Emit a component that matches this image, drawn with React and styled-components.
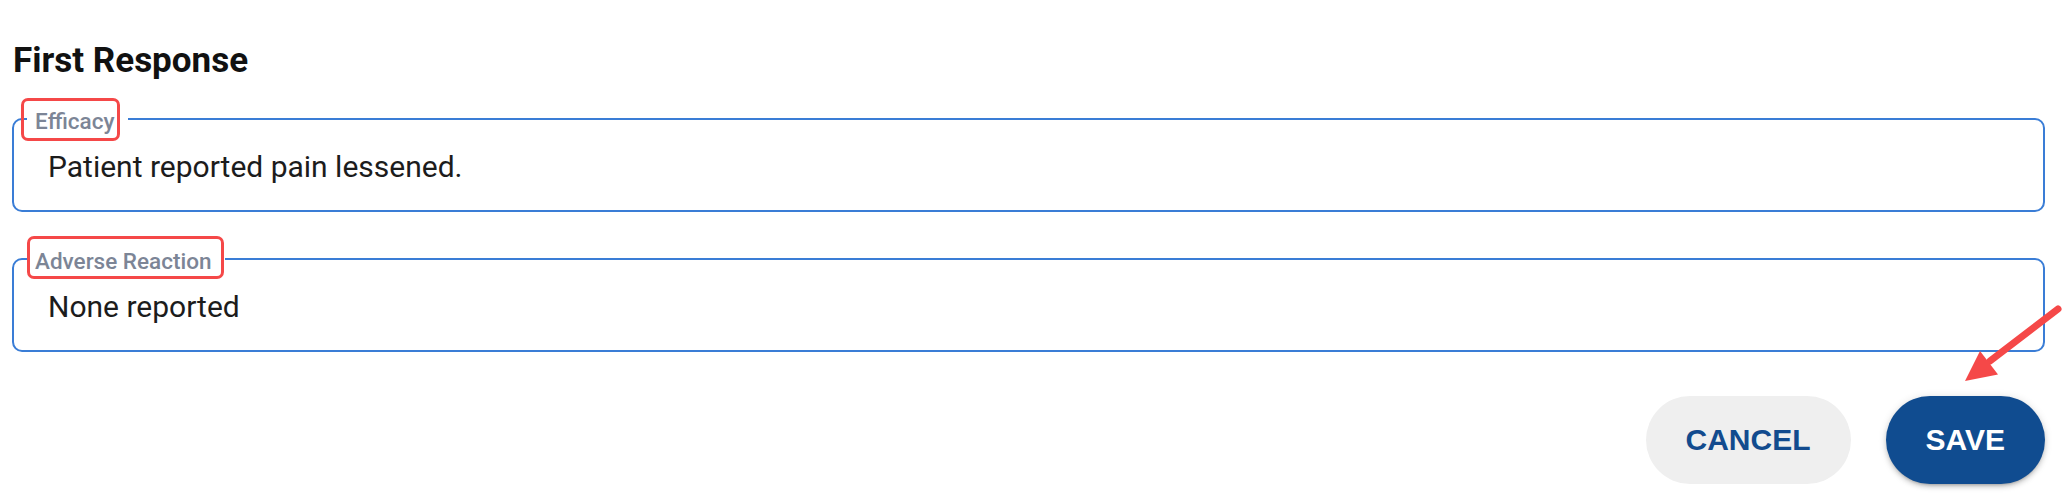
import React from "react";
import styled, { createGlobalStyle } from "styled-components";

const GlobalStyle = createGlobalStyle`
  html, body { margin: 0; padding: 0; background: #ffffff; }
  body { font-family: Roboto, "Noto Sans", Arial, sans-serif; }
`;

const Page = styled.div`
  position: relative;
  width: 2063px;
  height: 502px;
  box-sizing: border-box;
  padding: 40px 18px 0 12px;
  display: flex;
  flex-direction: column;
  overflow: hidden;
`;

const Title = styled.h2`
  margin: 0 0 0 1px;
  font-family: Roboto, Arial, sans-serif;
  font-weight: 700;
  font-size: 35px;
  line-height: 42px;
  color: #111111;
`;

const Fields = styled.div`
  display: flex;
  flex-direction: column;
  gap: 46px;
  margin-top: 36px;
`;

const Field = styled.div`
  position: relative;
  height: 94px;
  box-sizing: border-box;
  border: 2px solid #3a7dd6;
  border-radius: 10px;
  padding: 0 34px;
  display: flex;
  align-items: center;
`;

const Label = styled.span`
  position: absolute;
  top: -10px;
  left: 13px;
  padding: 0 14px 0 8px;
  background: #ffffff;
  font-family: Roboto, Arial, sans-serif;
  font-weight: 500;
  font-size: 22.5px;
  line-height: 1;
  color: #7c8596;
  white-space: nowrap;
`;

const Value = styled.div`
  font-family: Roboto, Arial, sans-serif;
  font-size: 30px;
  line-height: normal;
  color: #1c1c1c;
  margin-top: 2px;
`;

const Highlight = styled.div`
  position: absolute;
  left: ${(p) => p.$left}px;
  top: ${(p) => p.$top}px;
  width: ${(p) => p.$width}px;
  height: ${(p) => p.$height}px;
  box-sizing: border-box;
  border: 3px solid #f54848;
  border-radius: 7px;
  pointer-events: none;
`;

const Actions = styled.div`
  display: flex;
  justify-content: flex-end;
  gap: 35px;
  margin-top: 44px;
`;

const Button = styled.button`
  height: 88px;
  padding: 0 40px;
  border: none;
  border-radius: 44px;
  font-family: "Liberation Sans", Arial, sans-serif;
  font-weight: 700;
  font-size: 30px;
  letter-spacing: 0;
  cursor: pointer;
  background: ${(p) => (p.$primary ? "#104c90" : "#efefef")};
  color: ${(p) => (p.$primary ? "#ffffff" : "#124b8e")};
  box-shadow: ${(p) =>
    p.$primary
      ? "0 3px 3px -2px rgba(0,0,0,0.2), 0 3px 5px 0 rgba(0,0,0,0.14), 0 1px 8px 0 rgba(0,0,0,0.12)"
      : "none"};
`;

const Arrow = styled.svg`
  position: absolute;
  right: 0;
  top: 290px;
  width: 113px;
  height: 100px;
  pointer-events: none;
`;

export default function App() {
  return (
    <>
      <GlobalStyle />
      <Page>
        <Title>First Response</Title>
        <Fields>
          <Field>
            <Label>Efficacy</Label>
            <Highlight $left={7} $top={-22} $width={99} $height={43} />
            <Value>Patient reported pain lessened.</Value>
          </Field>
          <Field>
            <Label>Adverse Reaction</Label>
            <Highlight $left={13} $top={-24} $width={197} $height={43} />
            <Value>None reported</Value>
          </Field>
        </Fields>
        <Actions>
          <Button>CANCEL</Button>
          <Button $primary>SAVE</Button>
        </Actions>
        <Arrow viewBox="0 0 113 100">
          <line
            x1="108"
            y1="19"
            x2="40"
            y2="71"
            stroke="#f54848"
            strokeWidth="7"
            strokeLinecap="round"
          />
          <polygon points="15,91 48,84.5 30,61" fill="#f54848" />
        </Arrow>
      </Page>
    </>
  );
}
